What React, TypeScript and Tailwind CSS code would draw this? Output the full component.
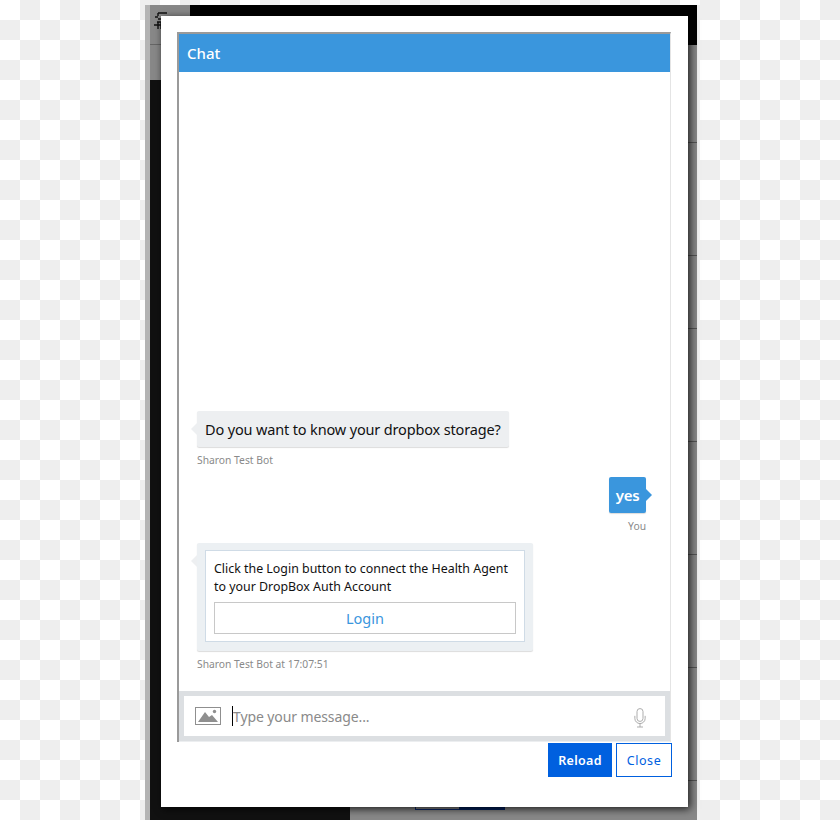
const font = "font-['Noto_Sans','Open_Sans',sans-serif]";

function ImageIcon() {
  return (
    <svg width="26" height="18" viewBox="0 0 26 18" className="shrink-0">
      <rect x="0.5" y="0.5" width="25" height="17" fill="#fff" stroke="#8f8f8f" />
      <path d="M3 15 L10 5 L14 10 L17 8 L23 15 Z" fill="#8f8f8f" />
      <circle cx="19.5" cy="4.5" r="1.7" fill="#8f8f8f" />
    </svg>
  );
}

function MicIcon() {
  return (
    <svg width="12" height="22" viewBox="0 0 14 23" fill="none" stroke="#a8a8a8" strokeWidth="1.1" className="shrink-0 mt-[3px]">
      <rect x="3.5" y="0.5" width="7" height="15" rx="3.5" />
      <path d="M1 9 V12 A6 6 0 0 0 13 12 V9" />
      <path d="M7 18 V22 M3.5 22 H10.5" />
    </svg>
  );
}

function Caption({ children, right }: { children: React.ReactNode; right?: boolean }) {
  return (
    <div className={`mt-[6px] text-[10.3px] leading-[14px] text-[#8a8a8a] ${right ? "text-right" : ""}`}>
      {children}
    </div>
  );
}

function LeftNub() {
  return <span className="absolute left-[-6px] top-[12px] w-0 h-0 border-y-[6px] border-y-transparent border-r-[6px] border-r-[#edeff1]" />;
}

function Dialog() {
  return (
    <div className="relative z-10 h-[791px] bg-white shadow-[2px_2px_8px_rgba(0,0,0,0.8)] pl-[16px] pt-[16px] flex flex-col">
      <div className="w-[494px] h-[710px] border-l-2 border-t-2 border-[#9a9a9a] border-r border-r-[#e4e4e4] flex flex-col">
        <div className="h-[38px] shrink-0 bg-[#3a96dd] text-white text-[15px] font-medium leading-[38px] pl-[8px]">Chat</div>

        <div className="flex-1 min-h-0 flex flex-col justify-end px-[18px] pb-[20px] bg-white">
          <div className="self-start">
            <div className="relative bg-[#edeff1] h-[36px] w-[312px] pl-[8px] text-[14.5px] tracking-[-0.15px] leading-[36px] text-[#111] rounded-[2px] shadow-[0_1px_1px_rgba(0,0,0,0.14)] whitespace-nowrap">
              <LeftNub />
              Do you want to know your dropbox storage?
            </div>
            <Caption>Sharon Test Bot</Caption>
          </div>

          <div className="self-end mt-[10px] mr-[6px]">
            <div className="relative ml-auto w-[37px] h-[36px] bg-[#3a96dd] rounded-[2px] text-white text-[15px] font-semibold leading-[36px] text-center tracking-[-0.3px] shadow-[0_1px_1px_rgba(0,0,0,0.14)]">
              yes
              <span className="absolute right-[-6px] top-[12px] w-0 h-0 border-y-[6px] border-y-transparent border-l-[6px] border-l-[#3a96dd]" />
            </div>
            <Caption right>You</Caption>
          </div>

          <div className="self-start mt-[10px]">
            <div className="relative w-[336px] h-[108px] bg-[#ecf0f3] rounded-[2px] px-[8px] pt-[7px] shadow-[0_1px_1px_rgba(0,0,0,0.14)]">
              <LeftNub />
              <div className="h-[92px] bg-white border border-[#cfdbe6] px-[8px] pt-[9px]">
                <div className="text-[12.4px] leading-[18px] text-[#111]">
                  Click the Login button to connect the Health Agent to your DropBox Auth Account
                </div>
                <div className="mt-[6px] h-[32px] border border-[#c8c8c8] text-center text-[14.5px] leading-[30px] text-[#3a96dd]">Login</div>
              </div>
            </div>
            <Caption>Sharon Test Bot at 17:07:51</Caption>
          </div>
        </div>

        <div className="h-[51px] shrink-0 bg-[#dcdfe2] p-[5px] border-b border-b-[#eceef0]">
          <div className="h-[40px] bg-white flex items-center pl-[11px] pr-[19px]">
            <ImageIcon />
            <div className="ml-[11px] w-px h-[20px] bg-black" />
            <div className="flex-1 mt-[1px] text-[14px] tracking-[-0.1px] text-[#8a8a8a] leading-[22px]">Type your message...</div>
            <MicIcon />
          </div>
        </div>
      </div>

      <div className="flex justify-end gap-[4px] mt-[1px] w-[495px]">
        <div className="w-[64px] h-[34px] bg-[#0060df] text-white text-[12.5px] font-semibold leading-[36px] text-center tracking-[0.3px]">Reload</div>
        <div className="w-[56px] h-[34px] border border-[#0060df] text-[#0060df] text-[12.5px] leading-[34px] text-center tracking-[0.6px]">Close</div>
      </div>
    </div>
  );
}

export default function App() {
  return (
    <div className={`relative w-[840px] h-[820px] overflow-hidden pl-[150px] pt-[5px] bg-[repeating-conic-gradient(#eeeeee_0_25%,#ffffff_0_50%)] bg-[length:40px_40px] ${font}`}>
      {/* dimmed page behind the dialog */}
      <div className="relative w-[547px] h-[815px] flex bg-[#888888] shadow-[-5px_0_0_#b4b4b4,3px_0_0_#f0f0f0]">
        <div className="w-[11px] flex flex-col">
          <div className="h-[39px] border-b border-[#666666] box-content" />
          <div className="h-[35px]" />
          <div className="flex-1 bg-[#111111]" />
        </div>

        <div className="w-[527px] flex flex-col">
          <div className="h-[11px] flex">
            <div className="w-[29px]" />
            <div className="flex-1 bg-black" />
          </div>
          <Dialog />
          <div className="flex-1 flex">
            <div className="w-[189px] bg-[#111111]" />
            <div className="ml-[65px] w-[44px] h-[3px] border-b border-l border-[#0b2a6e]" />
            <div className="w-[46px] h-[3px] bg-[#02205f]" />
          </div>
        </div>

        <div className="w-[9px] flex flex-col">
          <div className="h-[40px] bg-black" />
          <div className="h-[98px] border-b border-[#555555]" />
          <div className="h-[113px] border-b border-[#555555]" />
          <div className="h-[73px] border-b border-[#555555]" />
          <div className="h-[113px] border-b border-[#555555]" />
          <div className="h-[113px] border-b border-[#555555]" />
          <div className="h-[113px] border-b border-[#555555]" />
          <div className="h-[113px] border-b border-[#555555]" />
        </div>

        <svg width="14" height="20" viewBox="0 0 14 20" className="absolute left-[3px] top-[7px]">
          <path d="M5 1 H14 M5 1 V4 M2 5 H5 M5 7 H8 M4 10 H8 M1 13 H9 M5 10 V17 M8 10 V17" stroke="#111" strokeWidth="1.4" fill="none" />
        </svg>
      </div>
    </div>
  );
}
